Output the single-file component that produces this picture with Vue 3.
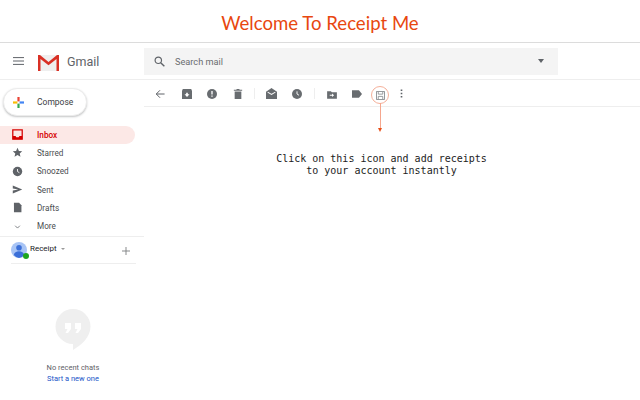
<template>
  <div class="page">
    <h1 class="banner">Welcome To Receipt Me</h1>

    <header class="topbar">
      <div class="brand">
        <svg width="11" height="8" viewBox="0 0 11 8"><path d="M0 .6h11M0 4h11M0 7.400h11" stroke="#5f6368" stroke-width="1" /></svg>
        <svg class="logo" width="21" height="17" viewBox="0 0 21 17">
          <path d="M1 1h19v16H1z" fill="#efefef" />
          <path d="M0 1h2l8.500 7L19 1h2v16h-2.500V5l-8 6.300L2.500 5v12H0z" fill="#d93025" />
        </svg>
        <span class="gmail">Gmail</span>
      </div>
      <div class="search">
        <svg width="11" height="11" viewBox="0 0 12 12"><circle cx="4.700" cy="4.700" r="3.500" fill="none" stroke="#5f6368" stroke-width="1.300" /><path d="M7.300 7.300l4 4" stroke="#5f6368" stroke-width="1.500" /></svg>
        <span class="search-text">Search mail</span>
        <span class="caret"></span>
      </div>
    </header>

    <div class="body">
      <aside class="sidebar">
        <button class="compose">
          <svg width="11" height="11" viewBox="0 0 12 12">
            <path d="M4.800 0h2.400v4.800H4.800z" fill="#ea4335" />
            <path d="M7.200 4.800H12v2.400H7.200z" fill="#4285f4" />
            <path d="M4.800 7.200h2.400V12H4.800z" fill="#34a853" />
            <path d="M0 4.800h4.800v2.400H0z" fill="#fbbc04" />
          </svg>
          <span>Compose</span>
        </button>

        <nav class="nav">
          <div v-for="item in navItems" :key="item.label" class="nav-row" :class="{ active: item.active }">
            <span class="nav-icon">
              <svg width="14" height="14" viewBox="0 0 14 14" v-html="item.icon"></svg>
            </span>
            <span>{{ item.label }}</span>
          </div>
        </nav>

        <div class="account">
          <span class="avatar">
            <svg width="16" height="16" viewBox="0 0 16 16">
              <circle cx="8" cy="8" r="8" fill="#a8c4f5" />
              <circle cx="8" cy="5.800" r="2.800" fill="#3b6fd8" />
              <path d="M2.800 13c.4-2.600 2.600-3.800 5.200-3.800s4.800 1.200 5.200 3.800A8 8 0 0 1 8 16a8 8 0 0 1-5.200-3z" fill="#3b6fd8" />
            </svg>
            <span class="online"></span>
          </span>
          <span class="account-name">Receipt</span>
          <span class="account-caret"></span>
          <svg class="plus" width="8" height="8" viewBox="0 0 9 9"><path d="M4.500 0v9M0 4.500h9" stroke="#7a7d80" stroke-width="1" /></svg>
        </div>
        <div class="account-rule"></div>

        <div class="chats">
          <svg width="36" height="42" viewBox="0 0 36 42">
            <path d="M18 0a17.500 17.500 0 0 1 17.500 17.500C35.500 28 27 35.500 18 41v-6A17.500 17.500 0 0 1 18 0z" fill="#efefef" />
            <path d="M10 14h6v6l-3 4h-2.500l2-4H10zM20 14h6v6l-3 4h-2.500l2-4H20z" fill="#fff" />
          </svg>
          <p class="no-chats">No recent chats</p>
          <a class="new-chat">Start a new one</a>
        </div>
      </aside>

      <main class="content">
        <div class="toolbar">
          <svg class="tool back" width="10" height="10" viewBox="0 0 12 12"><path d="M11.500 6H1.500M6 1.500L1.500 6 6 10.500" fill="none" stroke="#5f6368" stroke-width="1.200" /></svg>
          <svg class="tool archive" width="10" height="10" viewBox="0 0 12 12"><path d="M1 0h10l1 2v10H0V2z" fill="#686c70" /><path d="M6 9.500L3 6.200h2V4.500h2v1.700h2z" fill="#fff" /></svg>
          <svg class="tool spam" width="10" height="10" viewBox="0 0 12 12"><circle cx="6" cy="6" r="6" fill="#686c70" /><path d="M5.200 2.500h1.600v4.200H5.200zM5.200 7.800h1.600v1.600H5.200z" fill="#fff" /></svg>
          <svg class="tool trash" width="10" height="10" viewBox="0 0 12 12"><path d="M2 3h8v9H2zM1 1h3l.5-1h3l.5 1h3v1H1z" fill="#686c70" /></svg>
          <span class="sep sep-a"></span>
          <svg class="tool mail" width="11" height="11" viewBox="0 0 12 12"><path d="M0 4l6-4 6 4v8H0z" fill="#686c70" /><path d="M1.800 4.500L6 7l4.200-2.500" fill="none" stroke="#fff" stroke-width="1.100" /></svg>
          <svg class="tool clock" width="10" height="10" viewBox="0 0 12 12"><circle cx="6" cy="6" r="6" fill="#686c70" /><path d="M6 2.800V6l2.400 1.500" fill="none" stroke="#fff" stroke-width="1.100" /></svg>
          <span class="sep sep-b"></span>
          <svg class="tool move" width="10" height="9" viewBox="0 0 13 12"><path d="M0 1.500h5L6.300 3H13v8.500H0z" fill="#686c70" /><path d="M3.500 6.400h3V4.800l2.800 2.300-2.800 2.300V7.800h-3z" fill="#fff" /></svg>
          <svg class="tool label" width="10" height="8" viewBox="0 0 13 10"><path d="M0 0h9l4 5-4 5H0z" fill="#686c70" /></svg>
          <span class="receipt">
            <svg width="9" height="9" viewBox="0 0 10 10"><path d="M.5.500h9v9h-9z" fill="none" stroke="#85888b" /><path d="M2.500 1v2.500h5V1M2.500 9V6h5v3" fill="none" stroke="#85888b" stroke-width=".9" /></svg>
            <span class="pointer"></span>
          </span>
          <svg class="tool dots" width="3" height="9" viewBox="0 0 3 11"><path d="M.5.500h2v2h-2zM.5 4.500h2v2h-2zM.5 8.500h2v2h-2z" fill="#5f6368" /></svg>
        </div>
        <p class="hint">Click on this icon and add receipts<br />to your account instantly</p>
      </main>
    </div>
  </div>
</template>

<script setup>
const navItems = [
  { label: 'Inbox', active: true, icon: '<path d="M1 1h12v12H1z" fill="none" stroke="#d50000" stroke-width="1.600"/><path d="M1 9h3.500l1 1.500h3L9.500 9H13v4H1z" fill="#d50000"/>' },
  { label: 'Starred', icon: '<path d="M7 1l1.800 4 4.200.4-3.200 2.800 1 4.300L7 10.200 3.200 12.500l1-4.300L1 5.400 5.200 5z" fill="#5f6368"/>' },
  { label: 'Snoozed', icon: '<circle cx="7" cy="7" r="6" fill="#5f6368"/><path d="M7 3.800V7l2.400 1.500" fill="none" stroke="#fff" stroke-width="1.100"/>' },
  { label: 'Sent', icon: '<path d="M1 2l12 5-12 5V8.300L8 7 1 5.700z" fill="#5f6368"/>' },
  { label: 'Drafts', icon: '<path d="M2.500 1H9l3 3v9H2.500z" fill="#5f6368"/>' },
  { label: 'More', icon: '<path d="M4 6l3 3 3-3" fill="none" stroke="#5f6368" stroke-width="1"/>' }
]
</script>

<style>
html,
body {
  margin: 0;
  background: #fff;
}
</style>

<style scoped>
.page {
  width: 640px;
  height: 400px;
  overflow: hidden;
  font-family: Roboto, "Liberation Sans", sans-serif;
  color: #3c4043;
}

.banner {
  height: 42px;
  margin: 0;
  border-bottom: 1px solid #dcdcdc;
  font-family: Lato, "Liberation Sans", sans-serif;
  font-size: 18.6px;
  font-weight: 400;
  line-height: 47px;
  text-align: center;
  color: #e8470f;
}

.topbar {
  display: flex;
  align-items: center;
  height: 36px;
  border-bottom: 1px solid #eeeeee;
}

.brand {
  display: flex;
  align-items: center;
  width: 144px;
  padding-left: 13px;
  box-sizing: border-box;
}

.logo {
  margin: 3px 0 0 14px;
}

.gmail {
  margin-left: 8px;
  font-size: 12.5px;
  color: #5f6368;
}

.search {
  display: flex;
  align-items: center;
  width: 414px;
  height: 27px;
  padding: 0 14px 0 10px;
  box-sizing: border-box;
  background: #f4f4f4;
}

.search-text {
  flex: 1;
  margin-left: 10px;
  font-size: 9.2px;
  color: #6a6d70;
}

.caret {
  border: 3.5px solid transparent;
  border-top: 4px solid #5f6368;
  border-bottom: 0;
}

.body {
  display: flex;
}

.sidebar {
  width: 144px;
  flex: none;
}

.compose {
  display: flex;
  align-items: center;
  width: 84px;
  height: 28px;
  margin: 8px 0 0 3px;
  padding: 0 0 0 9px;
  border: 1px solid #ececec;
  border-radius: 14px;
  background: #fff;
  box-shadow: 0 1px 2px rgba(60, 64, 67, .3);
  font-family: inherit;
  font-size: 8.5px;
  color: #3c4043;
}

.compose span {
  margin-left: 13px;
}

.nav {
  margin: 9.5px 0 .5px;
}

.nav-row {
  display: flex;
  align-items: center;
  width: 135px;
  height: 18.3px;
  font-size: 8.2px;
  color: #4a4d50;
}

.nav-row.active {
  background: #fce8e6;
  border-radius: 0 10px 10px 0;
  color: #d50000;
  font-weight: 500;
}

.nav-icon {
  display: flex;
  justify-content: center;
  width: 37px;
  padding-right: 3px;
  box-sizing: border-box;
}

.nav-icon svg {
  width: 11px;
  height: 11px;
}

.account {
  display: flex;
  align-items: center;
  height: 26px;
  border-top: 1px solid #eeeeee;
  font-size: 8px;
  color: #202124;
}

.account-rule {
  width: 125px;
  height: 1px;
  margin-left: 11px;
  background: #eeeeee;
}

.avatar {
  position: relative;
  display: flex;
  margin-left: 11px;
}

.online {
  position: absolute;
  right: -2px;
  bottom: -1px;
  width: 6px;
  height: 6px;
  border-radius: 50%;
  background: #1ea51e;
}

.account-name {
  margin: 0 0 3px 3px;
}

.account-caret {
  margin: 0 0 2px 4px;
  border: 2px solid transparent;
  border-top: 2px solid #9a9a9a;
  border-bottom: 0;
}

.plus {
  margin: 2px 14px 0 auto;
}

.chats {
  display: flex;
  flex-direction: column;
  align-items: center;
  width: 146px;
  margin-top: 45px;
}

.no-chats {
  margin: 12px 0 0;
  font-size: 7.5px;
  color: #5f6368;
}

.new-chat {
  margin-top: 2px;
  font-size: 7.5px;
  color: #1a55c8;
}

.content {
  flex: 1;
}

.toolbar {
  position: relative;
  height: 26px;
  border-bottom: 1px solid #eeeeee;
}

.tool,
.sep,
.receipt {
  position: absolute;
}

.tool {
  top: 8.5px;
}

.back { left: 11px; }
.archive { left: 38px; }
.spam { left: 63px; }
.trash { left: 89px; }
.mail { left: 122px; top: 8px; }
.clock { left: 148px; }
.move { left: 183px; top: 10px; }
.label { left: 208px; top: 10px; }
.dots { left: 256px; top: 9px; }

.sep {
  top: 8px;
  width: 1px;
  height: 11px;
  background: #eeeeee;
}

.sep-a { left: 110px; }
.sep-b { left: 170px; }

.receipt {
  left: 227px;
  top: 6px;
  display: flex;
  align-items: center;
  justify-content: center;
  width: 18px;
  height: 18px;
  box-sizing: border-box;
  border: 1px solid #f5b09a;
  border-radius: 50%;
}

.pointer {
  position: absolute;
  left: 7.5px;
  top: 16px;
  width: 1px;
  height: 26px;
  background: #f5a68d;
}

.pointer::after {
  content: "";
  position: absolute;
  left: -1.5px;
  bottom: -3px;
  border: 2px solid transparent;
  border-top: 4px solid #e8501a;
  border-bottom: 0;
}

.hint {
  margin: 46px 0 0;
  width: 475px;
  font-family: "DejaVu Sans Mono", monospace;
  font-size: 10px;
  line-height: 11.5px;
  text-align: center;
  color: #1c1c1c;
}
</style>
